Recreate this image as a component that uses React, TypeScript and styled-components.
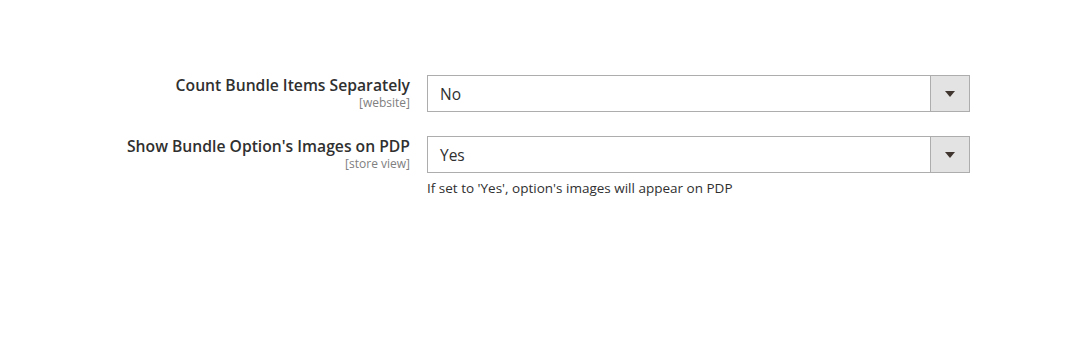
import React from 'react';
import styled, { createGlobalStyle } from 'styled-components';

interface Field {
  label: string;
  scope: string;
  value: string;
  note?: string;
}

const GlobalStyle = createGlobalStyle`
  body {
    margin: 0;
    background: #ffffff;
    font-family: 'Open Sans', 'Liberation Sans', sans-serif;
    color: #303030;
  }
`;

const Page = styled.div`
  width: 1074px;
  height: 352px;
  padding-top: 75px;
  box-sizing: border-box;
`;

const Form = styled.div`
  display: flex;
  flex-direction: column;
  gap: 24px;
`;

const Row = styled.div`
  display: grid;
  grid-template-columns: 410px 543px;
  column-gap: 17px;
  align-items: start;
`;

const LabelCol = styled.div`
  display: flex;
  flex-direction: column;
  align-items: flex-end;
  text-align: right;
`;

const Label = styled.label`
  font-size: 15.7px;
  font-weight: 600;
  line-height: 20px;
  color: #303030;
`;

const Scope = styled.span`
  font-size: 12px;
  line-height: 14px;
  margin-top: 1px;
  color: #808080;
`;

const Control = styled.div`
  display: flex;
  flex-direction: column;
`;

const Select = styled.div`
  display: flex;
  height: 37px;
  border: 1px solid #adadad;
  box-sizing: border-box;
  background: #ffffff;
`;

const Value = styled.span`
  flex: 1;
  padding: 1px 0 0 12px;
  font-size: 15.5px;
  line-height: 34px;
  color: #303030;
`;

const ArrowBox = styled.span`
  width: 38px;
  display: flex;
  align-items: center;
  justify-content: center;
  background: #e3e3e3;
  border-left: 1px solid #adadad;
`;

const Arrow = styled.span`
  width: 0;
  height: 0;
  border-left: 5px solid transparent;
  border-right: 5px solid transparent;
  border-top: 6px solid #41362f;
`;

const Note = styled.div`
  margin-top: 6px;
  font-size: 13.5px;
  line-height: 18px;
  color: #303030;
`;

const fields: Field[] = [
  { label: 'Count Bundle Items Separately', scope: '[website]', value: 'No' },
  {
    label: "Show Bundle Option's Images on PDP",
    scope: '[store view]',
    value: 'Yes',
    note: "If set to 'Yes', option's images will appear on PDP",
  },
];

function App(): React.ReactElement {
  return (
    <Page>
      <GlobalStyle />
      <Form>
        {fields.map(f => (
          <Row key={f.label}>
            <LabelCol>
              <Label>{f.label}</Label>
              <Scope>{f.scope}</Scope>
            </LabelCol>
            <Control>
              <Select>
                <Value>{f.value}</Value>
                <ArrowBox>
                  <Arrow />
                </ArrowBox>
              </Select>
              {f.note && <Note>{f.note}</Note>}
            </Control>
          </Row>
        ))}
      </Form>
    </Page>
  );
}

export default App;
